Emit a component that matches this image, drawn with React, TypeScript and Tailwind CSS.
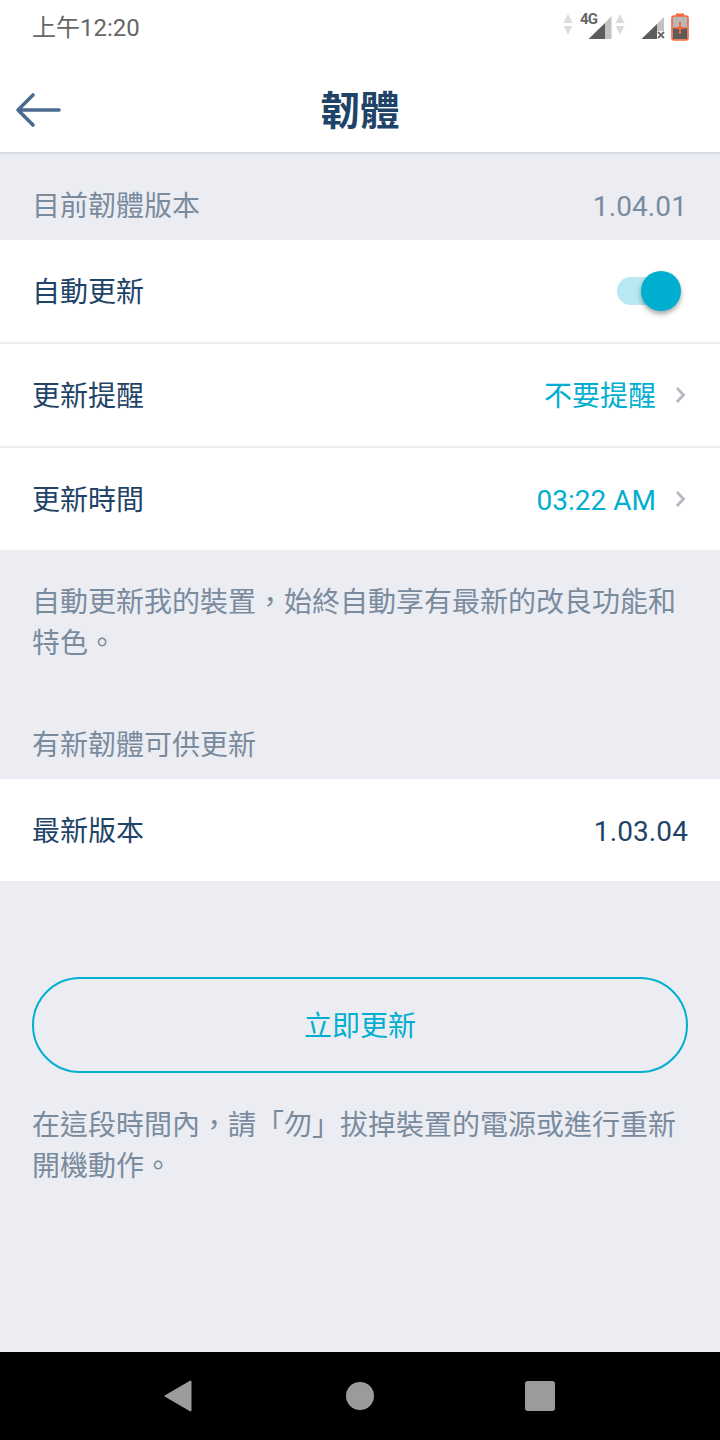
const cjk = "font-['Roboto','Noto_Sans_CJK_TC',sans-serif]";

function Chevron() {
  return (
    <svg width="11" height="18" viewBox="0 0 11 18" className="ml-[19px] mr-[2px] mt-[-3px]">
      <path d="M2 2 L8.5 9 L2 16" fill="none" stroke="#b4bac4" strokeWidth="2.8" />
    </svg>
  );
}

function StatusIcons() {
  return (
    <svg width="136" height="44" viewBox="0 0 136 44">
      <path d="M8 14 L12.5 23 H3.5 Z" fill="#dcdcdc" />
      <path d="M3.5 26 H12.5 L8 34.5 Z" fill="#dcdcdc" />
      <text x="20" y="24" fontSize="15" fontWeight="700" fill="#666" fontFamily="Roboto" textLength="18">4G</text>
      <path d="M28.5 39 L45 39 L45 23 Z" fill="#5c5c5c" />
      <path d="M45 39 H51.5 V16 L45 23 Z" fill="#c2c2c2" />
      <path d="M60 14 L64.5 23 H55.5 Z" fill="#dcdcdc" />
      <path d="M55.5 26 H64.5 L60 34.5 Z" fill="#dcdcdc" />
      <path d="M81.5 39 L97 24 V39 Z" fill="#5c5c5c" />
      <path d="M97 24 L104 17 V31 H97 Z" fill="#c2c2c2" />
      <path d="M98 32 L104 38 M104 32 L98 38" stroke="#666" strokeWidth="1.8" />
      <rect x="112" y="16" width="16" height="24" rx="2" fill="#b8b8b8" stroke="#f4693a" strokeWidth="1.6" />
      <rect x="116" y="13.5" width="8" height="2.5" fill="#f4693a" />
      <rect x="113" y="28" width="14" height="11" fill="#5c5c5c" />
      <path d="M120 22 V34 M114.5 28 H125.5" stroke="#f4693a" strokeWidth="2" />
    </svg>
  );
}

function Row({ label, children, border }: { label: string; children: React.ReactNode; border?: boolean }) {
  return (
    <div className={`flex items-center justify-between bg-white pl-[32px] pr-[32px] pt-[3px] ${border ? "h-[104px] border-b-2 border-[#eceef2]" : "h-[102px]"}`}>
      <span className="text-[28px] text-[#1f4468]">{label}</span>
      <div className="flex items-center">{children}</div>
    </div>
  );
}

export default function App() {
  return (
    <div className={`flex h-[1440px] w-[720px] flex-col overflow-hidden bg-[#ebedf3] ${cjk}`}>
      <div className="flex h-[52px] items-start justify-between bg-white pl-[32px] pr-[24px]">
        <span className="mt-[11px] text-[24px] leading-[34px] text-[#666666]">上午12:20</span>
        <StatusIcons />
      </div>
      <div className="relative flex h-[102px] items-center justify-center border-b-2 border-[#d8dbe3] bg-white pt-[20px]">
        <svg width="48" height="36" viewBox="0 0 48 36" className="absolute left-[15px] top-[40px]">
          <path d="M3 18 H44 M18 3 L3 18 L18 33" fill="none" stroke="#4a6b8e" strokeWidth="3.6" strokeLinecap="round" strokeLinejoin="round" />
        </svg>
        <span className="text-[39.5px] font-bold leading-[48px] text-[#1f4468]">韌體</span>
      </div>
      <div className="flex h-[86px] items-center justify-between pl-[32px] pr-[33px] pt-[19px] text-[28px] text-[#7a8b9e]">
        <span>目前韌體版本</span>
        <span className="tracking-[0.1px]">1.04.01</span>
      </div>
      <Row label="自動更新" border>
        <div className="relative mr-[15px] mt-[-3px] h-[28px] w-[56px] rounded-full bg-[#b8e8f2]">
          <div className="absolute right-[-8px] top-[-6px] h-[40px] w-[40px] rounded-full bg-[#00afd0] shadow-[0_3px_5px_rgba(0,0,0,0.35)]"></div>
        </div>
      </Row>
      <Row label="更新提醒" border>
        <span className="text-[28px] text-[#00afd0]">不要提醒</span>
        <Chevron />
      </Row>
      <Row label="更新時間">
        <span className="text-[28px] text-[#00afd0]">03:22 AM</span>
        <Chevron />
      </Row>
      <p className="h-[175px] px-[32px] pt-[32px] text-[28px] leading-[41px] text-[#7a8b9e]">
        自動更新我的裝置，始終自動享有最新的改良功能和特色。
      </p>
      <div className="flex h-[54px] items-start pl-[32px] text-[28px] leading-[41px] text-[#7a8b9e]">有新韌體可供更新</div>
      <Row label="最新版本">
        <span className="text-[28px] tracking-[0.1px] text-[#1f4468]">1.03.04</span>
      </Row>
      <div className="mx-[32px] mt-[96px] flex h-[96px] items-center justify-center rounded-full border-2 border-[#00afd0] pt-[3px] text-[28px] text-[#00afd0]">
        立即更新
      </div>
      <p className="px-[32px] pt-[32px] text-[28px] leading-[41px] text-[#7a8b9e]">
        在這段時間內，請「勿」拔掉裝置的電源或進行重新開機動作。
      </p>
      <div className="mt-auto flex h-[88px] items-center bg-black">
        <svg width="720" height="88" viewBox="0 0 720 88">
          <path d="M165.5 44 L190.5 29.5 V58.5 Z" fill="#9b9b9b" stroke="#9b9b9b" strokeWidth="2" strokeLinejoin="round" />
          <circle cx="360" cy="44" r="14" fill="#9b9b9b" />
          <rect x="525" y="29" width="30" height="30" rx="3" fill="#9b9b9b" />
        </svg>
      </div>
    </div>
  );
}
